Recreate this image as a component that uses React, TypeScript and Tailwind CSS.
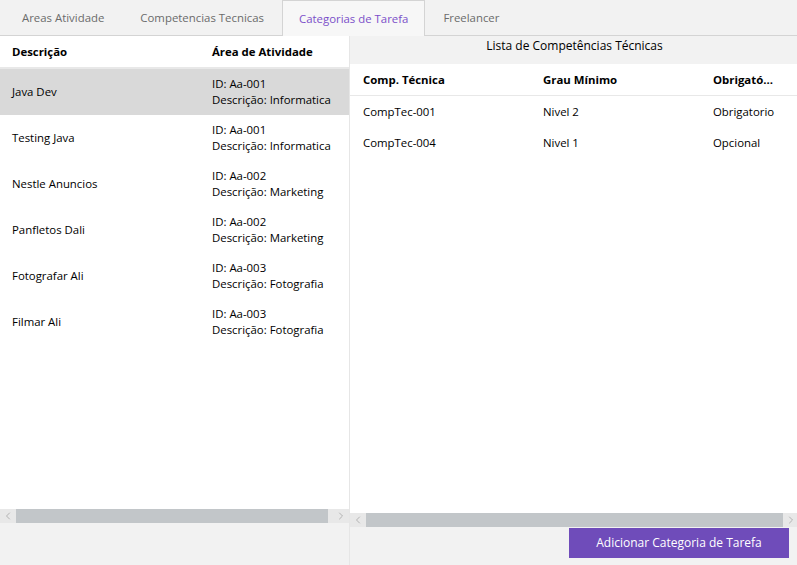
import { ChevronLeft, ChevronRight } from "lucide-react";

const tabs = ["Areas Atividade", "Competencias Tecnicas", "Categorias de Tarefa", "Freelancer"];

const categorias = [
  { desc: "Java Dev", id: "Aa-001", area: "Informatica" },
  { desc: "Testing Java", id: "Aa-001", area: "Informatica" },
  { desc: "Nestle Anuncios", id: "Aa-002", area: "Marketing" },
  { desc: "Panfletos Dali", id: "Aa-002", area: "Marketing" },
  { desc: "Fotografar Ali", id: "Aa-003", area: "Fotografia" },
  { desc: "Filmar Ali", id: "Aa-003", area: "Fotografia" },
];

const competencias = [
  { comp: "CompTec-001", grau: "Nivel 2", obrig: "Obrigatorio" },
  { comp: "CompTec-004", grau: "Nivel 1", obrig: "Opcional" },
];

function ScrollBar({ thumbClass }: { thumbClass: string }) {
  return (
    <div className="flex h-[14px] bg-[#e8e8e8]">
      <div className="flex w-[16px] items-center justify-center text-[#a0a0a0]">
        <ChevronLeft size={12} strokeWidth={1.5} />
      </div>
      <div className={`bg-[#c2c6c9] ${thumbClass}`} />
      <div className="flex-1" />
      <div className="flex w-[16px] items-center justify-center text-[#a0a0a0]">
        <ChevronRight size={12} strokeWidth={1.5} />
      </div>
    </div>
  );
}

export default function App() {
  return (
    <div
      className="flex h-[565px] w-[797px] flex-col bg-[#f2f2f2] text-[11.4px] text-black"
      style={{ fontFamily: '"Open Sans", "Noto Sans", sans-serif' }}
    >
      {/* tabs */}
      <div className="flex h-[36px] border-b border-[#d4d4d4] pl-[4px]">
        {tabs.map((t, i) =>
          i === 2 ? (
            <div
              key={t}
              className="-mb-px flex items-center border border-b-0 border-[#d4d4d4] bg-[#f7f7f7] px-[16px] text-[#7b4fc9]"
            >
              {t}
            </div>
          ) : (
            <div key={t} className="flex items-center px-[18px] text-[#6b6b6b]">
              {t}
            </div>
          )
        )}
      </div>

      <div className="flex flex-1">
        {/* left panel */}
        <div className="flex w-[350px] shrink-0 flex-col border-r border-[#e6e6e6]">
          <div className="flex flex-1 flex-col bg-white">
            <div className="flex h-[33px] items-center border-b-2 border-[#e8e8e8] font-bold">
              <div className="w-[212px] pl-[12px]">Descrição</div>
              <div>Área de Atividade</div>
            </div>
            {categorias.map((c, i) => (
              <div
                key={c.desc}
                className={`flex h-[46px] items-center leading-[16px] ${i === 0 ? "bg-[#d9d9d9]" : ""}`}
              >
                <div className="w-[212px] pl-[12px]">{c.desc}</div>
                <div>
                  <div>ID: {c.id}</div>
                  <div>Descrição: {c.area}</div>
                </div>
              </div>
            ))}
            <div className="flex-1" />
            <ScrollBar thumbClass="w-[312px]" />
          </div>
          <div className="h-[42px]" />
        </div>

        {/* right panel */}
        <div className="flex flex-1 flex-col">
          <div className="flex h-[28px] items-start justify-center pt-[1px] text-[12px]">
            Lista de Competências Técnicas
          </div>
          <div className="flex flex-1 flex-col bg-white">
            <div className="flex h-[32px] items-center border-b border-[#e8e8e8] font-bold">
              <div className="w-[193px] pl-[13px]">Comp. Técnica</div>
              <div className="w-[170px]">Grau Mínimo</div>
              <div>Obrigató...</div>
            </div>
            {competencias.map((c) => (
              <div key={c.comp} className="flex h-[31px] items-center">
                <div className="w-[193px] pl-[13px]">{c.comp}</div>
                <div className="w-[170px]">{c.grau}</div>
                <div>{c.obrig}</div>
              </div>
            ))}
            <div className="flex-1" />
            <ScrollBar thumbClass="w-[417px]" />
          </div>
          <div className="flex h-[38px] justify-end pr-[10px] pt-[1px]">
            <button className="h-[30px] w-[220px] bg-[#6f4cba] text-[12px] text-white">
              Adicionar Categoria de Tarefa
            </button>
          </div>
        </div>
      </div>
    </div>
  );
}
